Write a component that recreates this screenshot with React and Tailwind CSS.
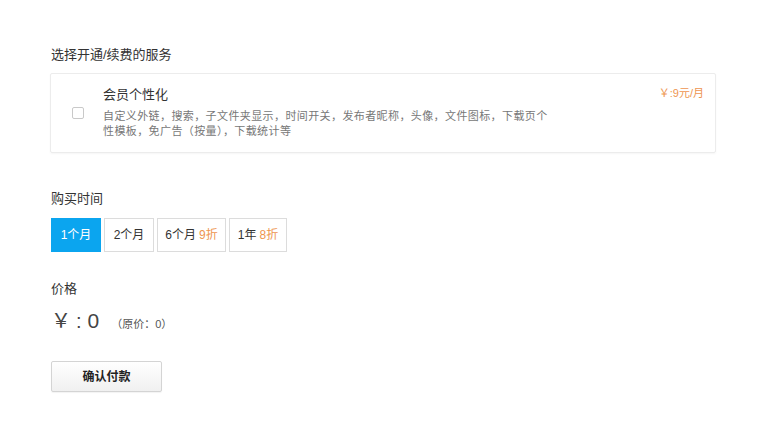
import { useState } from 'react'

const font = { fontFamily: '"Liberation Sans", "Noto Sans CJK SC", sans-serif' }

const periods = [
  { key: 1, label: '1个月', w: 'w-[50px]' },
  { key: 2, label: '2个月', w: 'w-[50px]' },
  { key: 6, label: '6个月', off: '9折', w: 'w-[69px]' },
  { key: 12, label: '1年', off: '8折', w: 'w-[58px]' },
]

export default function App() {
  const [period, setPeriod] = useState(1)
  const [checked, setChecked] = useState(false)

  return (
    <div style={font} className="w-[779px] h-[421px] bg-white text-[#333] pl-[50px] pt-[45px]">
      <div className="text-[13px] leading-[20px] pl-[1px]">选择开通/续费的服务</div>

      <div className="mt-[8px] w-[666px] h-[80px] border border-[#ececec] rounded-[2px] shadow-[0_1px_2px_rgba(0,0,0,0.04)] flex items-center relative">
        <button
          onClick={() => setChecked(!checked)}
          className={`ml-[21px] w-[12px] h-[12px] rounded-[2px] border ${checked ? 'bg-[#0ba5ef] border-[#0ba5ef]' : 'border-[#c9c9c9] bg-white'}`}
        />
        <div className="ml-[19px] -mt-[2px]">
          <div className="text-[13px] leading-[18px] text-[#333]">会员个性化</div>
          <div className="mt-[5px] text-[11px] leading-[15px] tracking-[0.4px] text-[#777] whitespace-nowrap">
            自定义外链，搜索，子文件夹显示，时间开关，发布者昵称，头像，文件图标，下载页个<br />
            性模板，免广告（按量），下载统计等
          </div>
        </div>
        <div className="absolute right-[11px] top-[12px] text-[11px] leading-[14px] text-[#ee9550]">￥:9元/月</div>
      </div>

      <div className="mt-[36px] text-[13px] leading-[20px] pl-[1px]">购买时间</div>
      <div className="mt-[9px] flex gap-[3px] pl-[1px]">
        {periods.map(p => (
          <button
            key={p.key}
            onClick={() => setPeriod(p.key)}
            className={`${p.w} h-[34px] flex items-center justify-center text-[12px] border ${period === p.key ? 'bg-[#0ba5ef] border-[#0ba5ef] text-white' : 'bg-white border-[#dcdcdc] text-[#333]'}`}
          >
            {p.label}
            {p.off && <span className="ml-[3px] text-[#ee9550]">{p.off}</span>}
          </button>
        ))}
      </div>

      <div className="mt-[27px] text-[13px] leading-[20px] pl-[1px]">价格</div>
      <div className="mt-[10px] flex items-baseline pl-[1px] h-[24px] text-[#444]">
        <span className="text-[20px] leading-[24px]">￥</span>
        <span className="ml-[5px] text-[20px] leading-[24px]">:</span>
        <span className="ml-[6px] text-[21px] leading-[24px]">0</span>
        <span className="ml-[12px] text-[11px] text-[#555]">（原价：0）</span>
      </div>

      <button className="mt-[28px] ml-[1px] w-[111px] h-[31px] rounded-[2px] border border-[#d4d4d4] bg-gradient-to-b from-white to-[#f0f0f0] text-[12px] font-bold text-[#222] shadow-[0_1px_1px_rgba(0,0,0,0.05)]">
        确认付款
      </button>
    </div>
  )
}
